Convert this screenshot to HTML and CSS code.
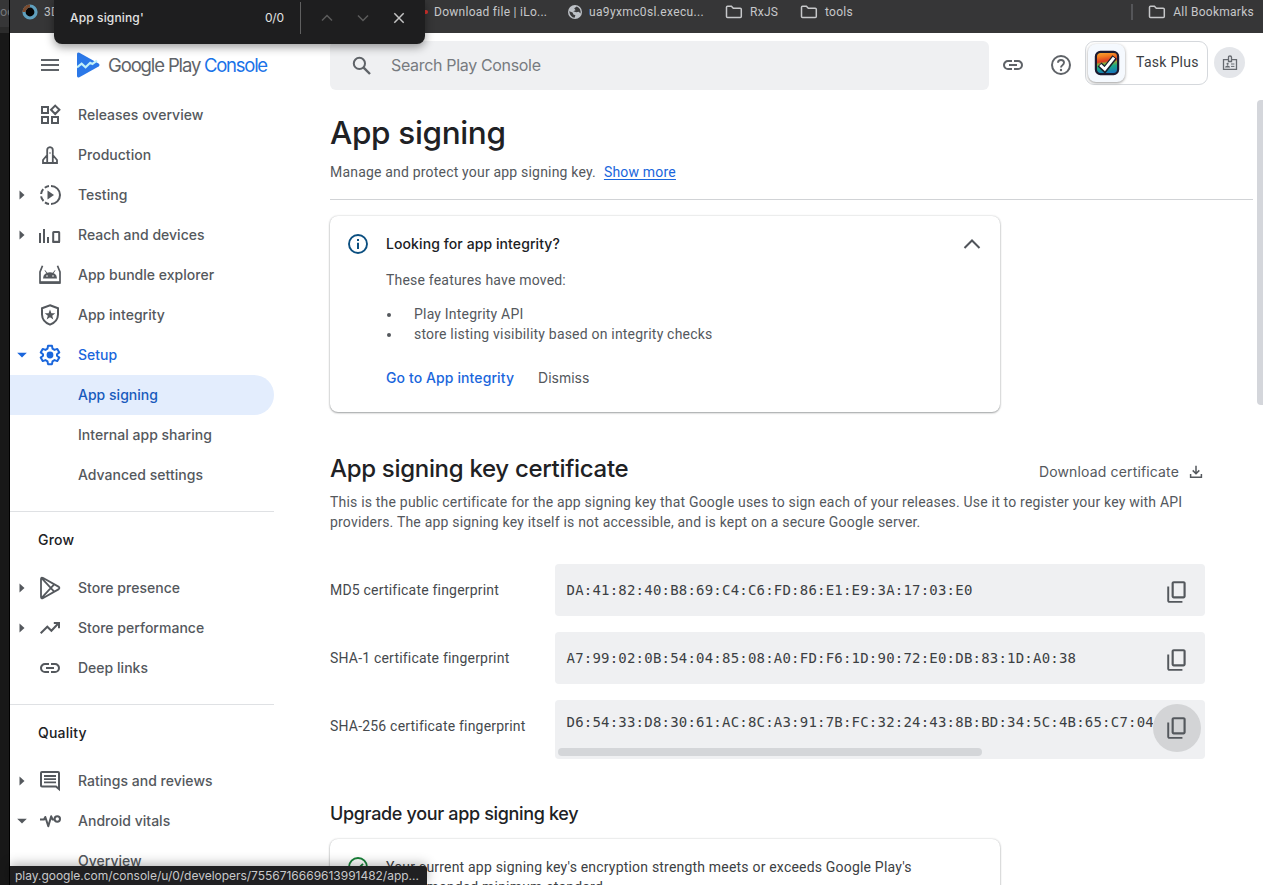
FILE: index.html
```
<!DOCTYPE html>
<html lang="en">
<head>
<meta charset="utf-8">
<title>App signing</title>
<link rel="stylesheet" href="styles.css">
</head>
<body>
<svg class="defs" width="0" height="0">
  <symbol id="folder" viewBox="0 0 18 14"><path d="M1.5 2.2Q1.5 1.2 2.5 1.2H6.4L8.3 3.2H15.2Q16.3 3.2 16.3 4.2V11.6Q16.3 12.6 15.3 12.6H2.5Q1.5 12.6 1.5 11.6Z" fill="none" stroke="currentColor" stroke-width="1.5"/></symbol>
  <symbol id="link" viewBox="0 0 24 24"><path fill="currentColor" d="M11 17H7q-2.075 0-3.537-1.463T2 12t1.463-3.537T7 7h4v2H7q-1.25 0-2.125.875T4 12t.875 2.125T7 15h4zm-3-4v-2h8v2zm5 4v-2h4q1.25 0 2.125-.875T20 12t-.875-2.125T17 9h-4V7h4q2.075 0 3.538 1.463T22 12t-1.463 3.538T17 17z"/></symbol>
  <symbol id="copy" viewBox="0 0 24 24"><path fill="currentColor" fill-rule="evenodd" d="M9 18q-.825 0-1.412-.587T7 16V4q0-.825.588-1.412T9 2h9q.825 0 1.413.588T20 4v12q0 .825-.587 1.413T18 18zm0-2h9V4H9zm-4 6q-.825 0-1.412-.587T3 20V7h1.800v13.200h12.200v1.800z"/></symbol>
  <symbol id="right" viewBox="0 0 10 10"><path d="M2.5 0.5L7.5 5L2.5 9.5Z" fill="currentColor"/></symbol>
  <symbol id="down" viewBox="0 0 10 10"><path d="M0.2 2.8H9.8L5 7.4Z" fill="currentColor"/></symbol>
</svg>

<div class="window">
  <div class="backdrop"><div class="backdrop-tab">oc</div></div>
  <div class="browser">
    <div class="bookmarks">
      <div class="bm bm-first">
        <svg width="18" height="18" viewBox="0 0 18 18"><circle cx="9" cy="9" r="6" fill="#050505" stroke="#5f9fbd" stroke-width="3.2"/><path d="M3 9A6 6 0 0 1 9 3" fill="none" stroke="#7b4a2d" stroke-width="3.2"/></svg>
        <span>3D</span>
      </div>
      <div class="bm bm-download"><i class="red-mark"></i><span>Download file | iLo...</span></div>
      <div class="bm bm-globe">
        <svg width="14" height="14" viewBox="0 0 14 14"><circle cx="7" cy="7" r="7" fill="#bdc1c6"/><path d="M1.2 6.2L4.6 7.4L5.4 9.4L7.4 10.3L6.6 12.8Q2 12 1.2 6.2ZM8.8 1.5L6.2 3.2L7.6 5.2L5.2 6.2L8.4 7.2L10.6 6.8L12.6 8.4Q13.2 3.6 8.8 1.5Z" fill="#3a3a3b"/></svg>
        <span>ua9yxmc0sl.execu...</span>
      </div>
      <div class="bm bm-rx"><svg width="18" height="14"><use href="#folder"/></svg><span>RxJS</span></div>
      <div class="bm bm-tools"><svg width="18" height="14"><use href="#folder"/></svg><span>tools</span></div>
      <div class="bm bm-all"><svg width="18" height="14"><use href="#folder"/></svg><span>All Bookmarks</span></div>
    </div>

    <div class="app">
      <aside class="side">
        <div class="brand">
          <svg class="burger" width="18" height="12" viewBox="0 0 18 12"><path d="M0 1H18M0 6H18M0 11H18" stroke="#5f6368" stroke-width="2"/></svg>
          <svg class="logo" width="23" height="26" viewBox="0 0 23 26"><path d="M0 2.2Q0 -.4 2.4 .8L21.6 11.6Q23.4 13 21.6 14.4L2.4 25.2Q0 26.4 0 23.8Z" fill="#2b78e8"/><path d="M0 15.4L4.6 11.6L8.6 15.2L13.2 10.8L15.4 12L20 8.6" fill="none" stroke="#c3f1f8" stroke-width="2.2"/></svg>
          <span class="brand-name">Google Play</span><span class="brand-sub">Console</span>
        </div>
        <nav class="nav">
          <a class="item"><i class="arrow"></i><svg class="ico" viewBox="0 0 24 24"><path d="M4 4H10V10H4ZM4 14H10V20H4ZM14 14H20V20H14ZM17.2 2.6L21.4 6.8L17.2 11L13 6.8Z" fill="none" stroke="currentColor" stroke-width="2"/></svg><span>Releases overview</span></a>
          <a class="item"><i class="arrow"></i><svg class="ico" viewBox="0 0 24 24"><path d="M9.2 20V7Q9.2 4.4 12 4.1Q14.8 4.4 14.8 7V20ZM9.2 12L5 17V20H19V17L14.8 12" fill="none" stroke="currentColor" stroke-width="1.8"/><circle cx="12" cy="10" r=".8" fill="currentColor"/></svg><span>Production</span></a>
          <a class="item"><svg class="arrow"><use href="#right"/></svg><svg class="ico" viewBox="0 0 24 24"><path d="M13 3A9 9 0 0 1 13 21M11 21A9 9 0 0 1 7 19.4M5.5 18A9 9 0 0 1 3.1 13.4M3.1 11A9 9 0 0 1 5.2 6.2M6.8 4.7A9 9 0 0 1 11 3" fill="none" stroke="currentColor" stroke-width="2"/><path d="M9.5 7.5L16 12L9.5 16.5Z" fill="currentColor"/></svg><span>Testing</span></a>
          <a class="item"><svg class="arrow"><use href="#right"/></svg><svg class="ico" viewBox="0 0 24 24"><path d="M2 10V20M6 6V20M10 14V20" stroke="currentColor" stroke-width="2"/><rect x="15.2" y="9" width="6" height="10" rx=".5" fill="none" stroke="currentColor" stroke-width="2"/><path d="M14.5 18.8H22" stroke="currentColor" stroke-width="2"/></svg><span>Reach and devices</span></a>
          <a class="item"><i class="arrow"></i><svg class="ico" viewBox="0 0 24 24"><path d="M4.5 2.7L2 9V19.8H22V9L19.5 2.7" fill="none" stroke="currentColor" stroke-width="1.7"/><path d="M2 19.5H22" stroke="currentColor" stroke-width="2.6"/><path d="M5 15.5Q5.4 9.4 12 9.2Q18.6 9.4 19 15.5Z" fill="currentColor"/><path d="M7 7.4L8.8 10.2M17 7.4L15.2 10.2" stroke="currentColor"/><circle cx="9" cy="13" r=".8" fill="#fff"/><circle cx="15" cy="13" r=".8" fill="#fff"/></svg><span>App bundle explorer</span></a>
          <a class="item"><i class="arrow"></i><svg class="ico" viewBox="0 0 24 24"><path d="M12 2.2L20 5.2V11.5Q19.8 18.8 12 21.6Q4.2 18.8 4 11.5V5.2Z" fill="none" stroke="currentColor" stroke-width="2"/><path d="M12 6.5L13.4 10.2L17.3 10.3L14.2 12.7L15.3 16.5L12 14.3L8.7 16.5L9.8 12.7L6.7 10.3L10.6 10.2Z" fill="currentColor"/></svg><span>App integrity</span></a>
          <a class="item open"><svg class="arrow"><use href="#down"/></svg><svg class="ico" viewBox="0 0 24 24"><path d="M10 2.8H14L14.5 5.7L16.5 6.9L19.3 5.9L21.3 9.4L19 11.2V12.8L21.3 14.6L19.3 18.1L16.5 17.1L14.5 18.3L14 21.2H10L9.5 18.3L7.5 17.1L4.7 18.1L2.7 14.6L5 12.8V11.2L2.7 9.4L4.7 5.9L7.5 6.9L9.5 5.7Z" fill="none" stroke="currentColor" stroke-width="2" stroke-linejoin="round"/><circle cx="12" cy="12" r="3.4" fill="currentColor"/></svg><span>Setup</span></a>
          <a class="item sub active"><span>App signing</span></a>
          <a class="item sub"><span>Internal app sharing</span></a>
          <a class="item sub"><span>Advanced settings</span></a>
          <div class="group">Grow</div>
          <a class="item"><svg class="arrow"><use href="#right"/></svg><svg class="ico" viewBox="0 0 24 24"><path d="M3 3.2Q3 .8 5.2 2L20.4 10.6Q22.4 12 20.4 13.4L5.2 22Q3 23.2 3 20.8ZM3.6 2.2L16.2 15.6M3.6 21.8L16.2 8.4" fill="none" stroke="currentColor" stroke-width="1.8"/></svg><span>Store presence</span></a>
          <a class="item"><svg class="arrow"><use href="#right"/></svg><svg class="ico" viewBox="0 0 24 24"><path d="M2.7 17.3L9.3 10.7L13.4 14.8L20.5 7.3M15.8 7H21V12.2" fill="none" stroke="currentColor" stroke-width="2"/></svg><span>Store performance</span></a>
          <a class="item"><i class="arrow"></i><svg class="ico"><use href="#link"/></svg><span>Deep links</span></a>
          <div class="group">Quality</div>
          <a class="item"><svg class="arrow"><use href="#right"/></svg><svg class="ico" viewBox="0 0 24 24"><path d="M3 4Q3 3 4 3H20Q21 3 21 4V20L18 17.5H4Q3 17.5 3 16.5Z" fill="none" stroke="currentColor" stroke-width="2"/><path d="M6 7H18M6 10.2H18M6 13.4H18" stroke="currentColor" stroke-width="1.8"/></svg><span>Ratings and reviews</span></a>
          <a class="item"><svg class="arrow"><use href="#down"/></svg><svg class="ico" viewBox="0 0 24 24"><path d="M2 10.5H6L7.3 8L10.3 17.3L13.2 7.3L14.6 10.5H16.5" fill="none" stroke="currentColor" stroke-width="2" stroke-linejoin="round"/><circle cx="19.3" cy="10" r="2.7" fill="none" stroke="currentColor" stroke-width="2"/></svg><span>Android vitals</span></a>
          <a class="item sub"><span>Overview</span></a>
        </nav>
      </aside>

      <main class="main">
        <div class="top">
          <div class="search">
            <svg width="20" height="20" viewBox="0 0 20 20"><circle cx="7.4" cy="7.4" r="5.6" fill="none" stroke="#5f6368" stroke-width="2"/><path d="M11.6 11.6L18 18" stroke="#5f6368" stroke-width="2.4"/></svg>
            <span>Search Play Console</span>
          </div>
          <svg class="top-link" width="24" height="24"><use href="#link"/></svg>
          <svg class="top-help" width="24" height="24" viewBox="0 0 24 24"><circle cx="12" cy="12" r="9" fill="none" stroke="currentColor" stroke-width="2"/><path d="M9 9.8Q9 7 12 7Q15 7 15 9.6Q15 11 13.4 12.2Q12 13.2 12 14.6" fill="none" stroke="currentColor" stroke-width="1.9"/><circle cx="12" cy="17" r="1.2" fill="currentColor"/></svg>
          <div class="account">
            <div class="account-icon"><svg width="26" height="26" viewBox="0 0 26 26"><defs><linearGradient id="rainbow" x1="0" y1="0" x2=".15" y2="1"><stop offset="0" stop-color="#f9b233"/><stop offset=".25" stop-color="#f37a20"/><stop offset=".47" stop-color="#dc3a22"/><stop offset=".56" stop-color="#8cab3a"/><stop offset=".72" stop-color="#18a884"/><stop offset="1" stop-color="#1679b8"/></linearGradient></defs><rect x="1.9" y="1.9" width="22.2" height="22.2" rx="4.5" fill="url(#rainbow)" stroke="#1c1b31" stroke-width="2.2"/><path d="M5.6 14.6L10.8 19.6L20.6 7" fill="none" stroke="#18202c" stroke-width="5.6"/><path d="M6.2 15L10.8 19.2L20 7.6" fill="none" stroke="#fff" stroke-width="2.9"/></svg></div>
            <span>Task Plus</span>
          </div>
          <div class="avatar"><svg width="16" height="16" viewBox="0 0 16 16"><path d="M6 4.7H1.5V14.3H14.5V4.7H10M6.5 6.5V2.2Q6.5 1 8 1Q9.5 1 9.5 2.2V6.5Z" fill="none" stroke="#666a70" stroke-width="1.3"/><circle cx="5.6" cy="8.8" r="1.1" fill="#666a70"/><path d="M3.5 12Q5.6 9.6 7.6 12ZM9 9H12.4M9 11.4H12.4" fill="#666a70" stroke="#666a70" stroke-width="1"/></svg></div>
        </div>

        <div class="content">
          <h1>App signing</h1>
          <p class="lead"><span>Manage and protect your app signing key.</span><a>Show more</a></p>

          <section class="card notice">
            <svg class="info" width="24" height="24" viewBox="0 0 24 24"><circle cx="12" cy="12" r="9" fill="none" stroke="#0b4f80" stroke-width="1.9"/><path d="M12 10.8V17M12 7V9" stroke="#0b4f80" stroke-width="2"/></svg>
            <div class="notice-body">
              <h3>Looking for app integrity?</h3>
              <p>These features have moved:</p>
              <ul><li>Play Integrity API</li><li>store listing visibility based on integrity checks</li></ul>
              <div class="actions"><a class="go">Go to App integrity</a><a class="dismiss">Dismiss</a></div>
            </div>
            <svg class="chev" width="18" height="12" viewBox="0 0 18 12"><path d="M1.5 10L9 2.5L16.5 10" fill="none" stroke="#50545a" stroke-width="2"/></svg>
          </section>

          <div class="section-head">
            <h2>App signing key certificate</h2>
            <a class="download"><span>Download certificate</span><svg width="14" height="14" viewBox="0 0 14 14"><path d="M7 .8V8.4M3.7 5.4L7 8.7L10.3 5.4M1.6 9V12.2H12.4V9" fill="none" stroke="currentColor" stroke-width="1.5"/></svg></a>
          </div>
          <p class="desc">This is the public certificate for the app signing key that Google uses to sign each of your releases. Use it to register your key with API<br>providers. The app signing key itself is not accessible, and is kept on a secure Google server.</p>

          <div class="prints">
            <div class="print"><label>MD5 certificate fingerprint</label><div class="field"><code>DA:41:82:40:B8:69:C4:C6:FD:86:E1:E9:3A:17:03:E0</code><button><svg width="26" height="26"><use href="#copy"/></svg></button></div></div>
            <div class="print"><label>SHA-1 certificate fingerprint</label><div class="field"><code>A7:99:02:0B:54:04:85:08:A0:FD:F6:1D:90:72:E0:DB:83:1D:A0:38</code><button><svg width="26" height="26"><use href="#copy"/></svg></button></div></div>
            <div class="print"><label>SHA-256 certificate fingerprint</label><div class="field scroll"><div class="scroll-area"><code>D6:54:33:D8:30:61:AC:8C:A3:91:7B:FC:32:24:43:8B:BD:34:5C:4B:65:C7:04</code><div class="hbar"></div></div><button class="hover"><svg width="26" height="26"><use href="#copy"/></svg></button></div></div>
          </div>

          <h4>Upgrade your app signing key</h4>
          <section class="card status">
            <svg width="24" height="24" viewBox="0 0 24 24"><circle cx="12" cy="12" r="9" fill="none" stroke="#188038" stroke-width="1.9"/><path d="M7 12.2L10.3 15.5L17 8.8" fill="none" stroke="#188038" stroke-width="1.9"/></svg>
            <p>Your current app signing key's encryption strength meets or exceeds Google Play's<br>recommended minimum standard.</p>
          </section>
        </div>
      </main>
    </div>
  </div>

  <div class="page-scroll"></div>
  <div class="find">
    <span class="find-text">App signing'</span><span class="find-count">0/0</span>
    <svg width="12" height="8" viewBox="0 0 12 8"><path d="M1 6.5L6 1.5L11 6.5" fill="none" stroke="#5b5b5b" stroke-width="1.5"/></svg>
    <svg width="12" height="8" viewBox="0 0 12 8"><path d="M1 1.5L6 6.5L11 1.5" fill="none" stroke="#5b5b5b" stroke-width="1.5"/></svg>
    <svg width="12" height="12" viewBox="0 0 12 12"><path d="M1.3 1.3L10.7 10.7M10.7 1.3L1.3 10.7" stroke="#c4c4c4" stroke-width="1.5"/></svg>
  </div>
  <div class="urlbar">play.google.com/console/u/0/developers/7556716669613991482/app...</div>
</div>
</body>
</html>
```
FILE: styles.css
```
* { box-sizing: border-box; }
body { margin: 0; background: #fff; font-family: Roboto, sans-serif; font-size: 14px; color: #54585d; }
h1, h2, h3, h4, p, ul { margin: 0; padding: 0; }
.defs { position: absolute; }
.window { position: relative; display: flex; width: 1263px; height: 885px; overflow: hidden; }
svg { flex: none; }

.backdrop { width: 10px; flex: none; background: #181818; border-right: 1px solid #000; }
.backdrop-tab { height: 33px; overflow: hidden; background: #363637; border-bottom: 6px solid #2b2b2b; color: #77797c; font: 12px/23px Inter, sans-serif; }
.browser { flex: 1; min-width: 0; display: flex; flex-direction: column; }

.bookmarks { display: flex; flex: none; height: 33px; padding-left: 11px; background: #363637; color: #c7c8ca; font: 12px/24px Roboto, sans-serif; letter-spacing: .27px; white-space: nowrap; }
.bm { display: flex; align-items: center; height: 24px; }
.bm-first { width: 400px; gap: 5px; }
.bm-download { width: 147px; gap: 6px; }
.red-mark { width: 7px; height: 4px; background: #e0342f; border-radius: 2px; }
.bm-globe { width: 157px; gap: 7px; letter-spacing: .36px; }
.bm-rx { width: 75px; gap: 7px; }
.bm-tools { gap: 7px; }
.bm-all { margin: 4px 9px 0 auto; height: 16px; padding-left: 15px; gap: 7px; border-left: 2px solid #555659; }

.app { flex: 1; display: flex; min-height: 0; background: #fff; }
.side { width: 264px; flex: none; }
.brand { display: flex; align-items: center; height: 62px; padding: 2px 0 0 31px; white-space: nowrap; }
.logo { margin: 0 8px 0 18px; }
.brand-name, .brand-sub { font: 400 18.5px/28px Inter, sans-serif; letter-spacing: -1.13px; color: #5f6368; }
.brand-name { width: 96px; }
.brand-sub { color: #1a73e8; letter-spacing: -1.25px; }
.item { display: flex; align-items: center; height: 40px; color: #54585d; font: 500 14px/20px Inter, sans-serif; letter-spacing: .02px; white-space: nowrap; }
.arrow { width: 10px; height: 10px; margin: 0 16px 0 7px; flex: none; }
.ico { width: 24px; height: 24px; margin: 0 16px 0 -5px; }
.item .ico + span { flex: 1; }
.open { color: #1a66dc; }
.sub { padding-left: 68px; }
.active { background: #e3edfd; color: #185abc; border-radius: 0 20px 20px 0; }
.group { margin-top: 16px; height: 57px; padding-left: 28px; border-top: 1px solid #dfe1e4; color: #202124; font: 500 14px/56px Inter, sans-serif; letter-spacing: .2px; }

.main { flex: 1; min-width: 0; padding-left: 56px; }
.top { display: flex; align-items: flex-start; height: 62px; padding-top: 8px; color: #5f6368; }
.search { display: flex; align-items: center; width: 659px; height: 49px; padding-left: 22px; gap: 19px; border-radius: 6px; background: #eff0f2; font: 16px Inter, sans-serif; letter-spacing: -.33px; color: #777b80; }
.search span { padding-bottom: 2px; }
.top-link { margin: 12px 0 0 12px; }
.top-help { margin: 12px 0 0 24px; }
.account { display: flex; align-items: center; width: 123px; height: 44px; margin-left: 12px; padding-left: 2px; gap: 11px; border: 1px solid #d5d8dc; border-radius: 9px; color: #3c4043; white-space: nowrap; letter-spacing: .3px; }
.account-icon { display: flex; align-items: center; justify-content: center; width: 37px; height: 38px; border-radius: 8px; background: #f5f9fe; box-shadow: 0 1px 3px #999; }
.account span { padding-bottom: 2px; }
.avatar { display: flex; align-items: center; justify-content: center; width: 31px; height: 31px; margin: 6px 0 0 6px; border-radius: 50%; background: #e4e6ea; }

.content { width: 923px; }
h1 { height: 67px; font: 500 31.5px/75px Inter, sans-serif; letter-spacing: -.35px; color: #202124; }
.lead { display: flex; gap: 8px; height: 38px; line-height: 20px; letter-spacing: .19px; border-bottom: 1px solid #d1d3d6; }
.lead a { color: #1a66dc; text-decoration: underline; text-underline-offset: 2px; }
.card { display: flex; width: 670px; border-radius: 8px; background: #fff; box-shadow: 0 1px 2px rgba(60,64,67,.45), 0 0 2px rgba(60,64,67,.25); }
.notice { height: 196px; margin-top: 16px; padding: 16px; }
.notice-body { flex: 1; margin-left: 16px; }
.notice h3 { font: 500 14px/24px Inter, sans-serif; letter-spacing: .09px; color: #202124; }
.notice p { margin-top: 14px; line-height: 20px; letter-spacing: .2px; }
.notice ul { margin-top: 14px; padding-left: 28px; line-height: 20px; letter-spacing: .2px; list-style: none; }
.notice li { display: flex; align-items: center; }
.notice li::before { content: ""; width: 4px; height: 4px; margin: 2px 23px 0 -27px; border-radius: 50%; background: currentColor; }
.actions { display: flex; gap: 24px; margin-top: 24px; font: 500 14px/20px Inter, sans-serif; letter-spacing: .1px; }
.go { color: #1a66dc; }
.dismiss { font-weight: 400; letter-spacing: 0; }
.chev { margin: 6px 3px 0 0; }

.section-head { display: flex; justify-content: space-between; height: 80px; padding-top: 40px; width: 873px; }
h2 { font: 500 24px/33px Inter, sans-serif; letter-spacing: -.31px; color: #202124; }
.download { display: flex; align-items: center; height: 39px; gap: 10px; font-family: Inter, sans-serif; letter-spacing: .15px; }
.download svg { margin-top: 1px; }
.desc { line-height: 20px; letter-spacing: .197px; white-space: nowrap; }
.prints { display: flex; flex-direction: column; gap: 16px; margin-top: 32px; }
.print { display: flex; }
.print label { width: 225px; line-height: 52px; color: #45494d; letter-spacing: .2px; white-space: nowrap; }
.field { display: flex; align-items: center; justify-content: space-between; width: 650px; height: 52px; padding: 0 4px 0 11.5px; border-radius: 4px; background: #eff0f2; }
code { font: 14px/20px "DejaVu Sans Mono", monospace; letter-spacing: .21px; color: #3c4043; white-space: nowrap; }
.field button { display: flex; align-items: center; justify-content: center; flex: none; width: 48px; height: 48px; margin-top: 4px; padding: 0; border: 0; border-radius: 50%; background: transparent; color: #54585d; }
.scroll.field { height: 59px; padding-left: 3px; align-items: flex-start; }
.field .hover { background: #d3d4d6; }
.scroll-area { width: 595px; overflow: hidden; }
.scroll code { display: block; margin: 12px 0 0 8.5px; }
.hbar { width: 424px; height: 8px; margin-top: 16px; border-radius: 4px; background: #d4d6d9; }
h4 { height: 80px; font: 500 18px/110px Inter, sans-serif; letter-spacing: -.34px; color: #202124; }
.status { height: 90px; padding: 16px; gap: 16px; color: #3c4043; letter-spacing: .197px; line-height: 20px; }
.status p { margin-top: 2px; }

.page-scroll { position: absolute; right: 0; top: 100px; width: 6px; height: 305px; border-radius: 4px 0 0 4px; background: #d4d6db; }
.find { position: absolute; left: 54px; top: 0; display: flex; align-items: center; width: 371px; height: 44px; padding: 0 20px 8px 16px; border-radius: 0 0 8px 8px; background: #1e1e1f; box-shadow: 0 3px 10px rgba(0,0,0,.4); color: #e3e3e3; font: 500 12px/16px Inter, sans-serif; letter-spacing: .14px; }
.find-text { width: 195px; }
.find-count { box-sizing: content-box; width: 19px; height: 32px; line-height: 32px; padding-right: 16px; border-right: 1px solid #606060; font-weight: 400; letter-spacing: -.2px; }
.find svg:nth-of-type(1) { margin-left: 20px; }
.find svg:nth-of-type(2) { margin-left: 24px; }
.find svg:nth-of-type(3) { margin-left: 24px; }
.urlbar { position: absolute; left: 10px; bottom: 0; width: 417px; height: 19px; padding-left: 5px; border-radius: 0 3px 0 0; background: #202022; box-shadow: 0 -2px 12px rgba(0,0,0,.3); color: #c8c9cb; font: 12px/20px Inter, sans-serif; letter-spacing: -.02px; white-space: nowrap; overflow: hidden; }
```
